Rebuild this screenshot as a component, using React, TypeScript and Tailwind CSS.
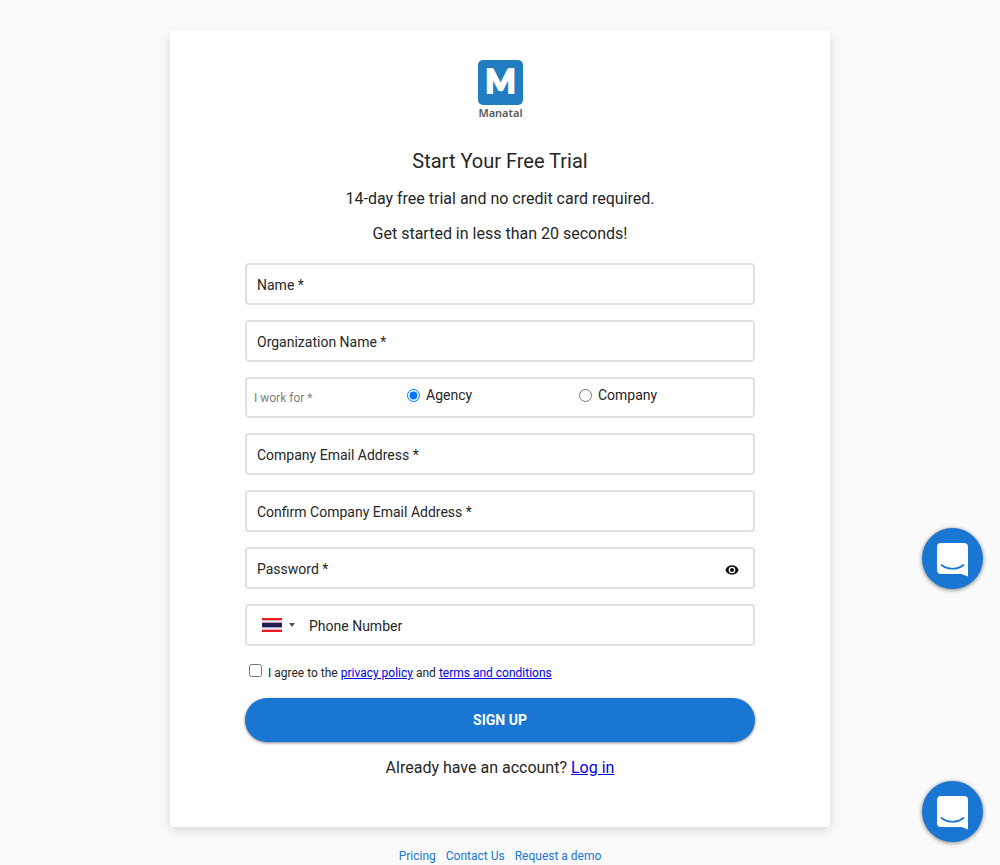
import { useState } from "react";

const FIELD = "flex items-center rounded border-2 border-[#e0e0e0] bg-white";
const INPUT =
  "h-[38px] w-full min-w-0 bg-transparent px-[10px] pt-[2px] text-sm text-[#262626] placeholder:text-[#262626] outline-none";

function Logo() {
  return (
    <svg width="45" height="60" viewBox="0 0 45 60" role="img" aria-label="Manatal">
      <rect width="45" height="45" rx="5" fill="#217dc1" />
      <text
        x="22.5"
        y="33"
        textAnchor="middle"
        fill="#fff"
        stroke="#fff"
        strokeWidth="1.800"
        className="font-['Lato',sans-serif] text-[32px] font-black"
      >
        M
      </text>
      <text x="22.5" y="57" textAnchor="middle" fill="#58585a" className="font-['Noto_Sans',sans-serif] text-[11px] font-semibold">
        Manatal
      </text>
    </svg>
  );
}

function TextField({ label, type = "text" }: { label: string; type?: string }) {
  return (
    <div className={FIELD}>
      <input type={type} aria-label={label} placeholder={label} className={INPUT} />
    </div>
  );
}

function PasswordField() {
  const [visible, setVisible] = useState(false);
  return (
    <div className={FIELD}>
      <input type={visible ? "text" : "password"} aria-label="Password *" placeholder="Password *" className={INPUT} />
      <button type="button" aria-label="Show password" onClick={() => setVisible(!visible)} className="mr-[14px] shrink-0 pt-1">
        <svg width="14" height="10" viewBox="0 0 14 10">
          <path d="M7 .3C3.8.3 1.4 2.2.4 5c1 2.800 3.400 4.700 6.600 4.700S12.600 7.800 13.600 5C12.600 2.200 10.200.3 7 .3Z" fill="#111" />
          <circle cx="7" cy="5" r="3.300" fill="#fff" />
          <circle cx="7" cy="5" r="2" fill="#111" />
        </svg>
      </button>
    </div>
  );
}

function PhoneField() {
  return (
    <div className={FIELD}>
      <button type="button" aria-label="Country: Thailand" className="flex h-[38px] shrink-0 items-center gap-[7px] pl-[15px] pr-1">
        <svg width="20" height="14" viewBox="0 0 20 14">
          <path fill="#e6e8f2" d="M0 0h20v14H0z" />
          <path fill="#ed1c24" d="M0 0h20v2.300H0zM0 11.700h20V14H0z" />
          <path fill="#241d4f" d="M0 4.700h20v4.600H0z" />
        </svg>
        <svg width="6" height="4" viewBox="0 0 6 4">
          <path fill="#555" d="M0 0h6L3 4z" />
        </svg>
      </button>
      <input type="tel" aria-label="Phone Number" placeholder="Phone Number" className={INPUT} />
    </div>
  );
}

function WorkForField() {
  return (
    <fieldset className="grid h-[41px] grid-cols-[152px_172px_1fr] items-start rounded border-2 border-[#e0e0e0] pl-[7px] text-sm" aria-label="I work for">
      <span className="pt-[11px] text-xs text-[#808080]">I work for *</span>
      <label className="flex items-center gap-[6px] pt-[6px]">
        <input type="radio" name="workFor" defaultChecked className="ml-[1px] h-[13px] w-[13px]" />
        Agency
      </label>
      <label className="flex items-center gap-[6px] pt-[6px]">
        <input type="radio" name="workFor" className="ml-[1px] h-[13px] w-[13px]" />
        Company
      </label>
    </fieldset>
  );
}

function ChatButton({ className }: { className: string }) {
  return (
    <button
      type="button"
      aria-label="Open chat"
      className={`fixed right-[17px] flex h-[61px] w-[61px] items-center justify-center rounded-full bg-[#1976d2] shadow-[0_1px_4px_rgba(0,0,0,0.5)] ${className}`}
    >
      <svg width="31" height="34" viewBox="0 0 31 34" className="mt-[2px]">
        <path d="M4 0h23a4 4 0 0 1 4 4v29.500L24.500 31H4a4 4 0 0 1-4-4V4a4 4 0 0 1 4-4Z" fill="#fff" />
        <path d="M4.500 22c6.600 5 15.400 5 22 0" fill="none" stroke="#1976d2" strokeWidth="1.700" strokeLinecap="round" />
      </svg>
    </button>
  );
}

export default function App() {
  return (
    <div className="min-h-screen bg-[#fafafa] px-4 pt-[30px] font-['Roboto',sans-serif] text-[#262626]">
      <main className="mx-auto max-w-[660px] rounded bg-white px-6 pt-[30px] pb-[47px] shadow-[0_4px_12px_rgba(0,0,0,0.12)] sm:px-[75px]">
        <div className="flex justify-center">
          <Logo />
        </div>
        <h1 className="mt-7 text-center text-xl leading-[26px]">Start Your Free Trial</h1>
        <p className="mt-[13px] text-center leading-6">14-day free trial and no credit card required.</p>
        <p className="mt-[11px] text-center leading-6">Get started in less than 20 seconds!</p>

        <form className="mt-[17px]" onSubmit={(e) => e.preventDefault()}>
          <div className="flex flex-col gap-[15px]">
            <TextField label="Name *" />
            <TextField label="Organization Name *" />
            <WorkForField />
            <TextField label="Company Email Address *" type="email" />
            <TextField label="Confirm Company Email Address *" type="email" />
            <PasswordField />
            <PhoneField />
          </div>
          <div className="mt-[18px] flex items-start gap-[6px] pl-1 text-xs leading-[18px]">
            <input id="agree" type="checkbox" className="h-[13px] w-[13px]" />
            <label htmlFor="agree">
              I agree to the{" "}
              <a href="#privacy" className="text-[#0000ee] underline">privacy policy</a> and{" "}
              <a href="#terms" className="text-[#0000ee] underline">terms and conditions</a>
            </label>
          </div>
          <button
            type="submit"
            className="mt-4 h-11 w-full rounded-full bg-[#1976d2] text-sm font-bold text-white shadow-[0_1px_3px_rgba(0,0,0,0.5)]"
          >
            SIGN UP
          </button>
        </form>
        <p className="mt-[14px] text-center leading-6">
          Already have an account? <a href="#login" className="text-[#0000ee] underline">Log in</a>
        </p>
      </main>

      <footer className="flex justify-center gap-[10px] pt-5 text-xs leading-[18px] text-[#1976d2]">
        <a href="#pricing">Pricing</a>
        <a href="#contact">Contact Us</a>
        <a href="#demo">Request a demo</a>
      </footer>

      <ChatButton className="bottom-[276px]" />
      <ChatButton className="bottom-[23px]" />
    </div>
  );
}
